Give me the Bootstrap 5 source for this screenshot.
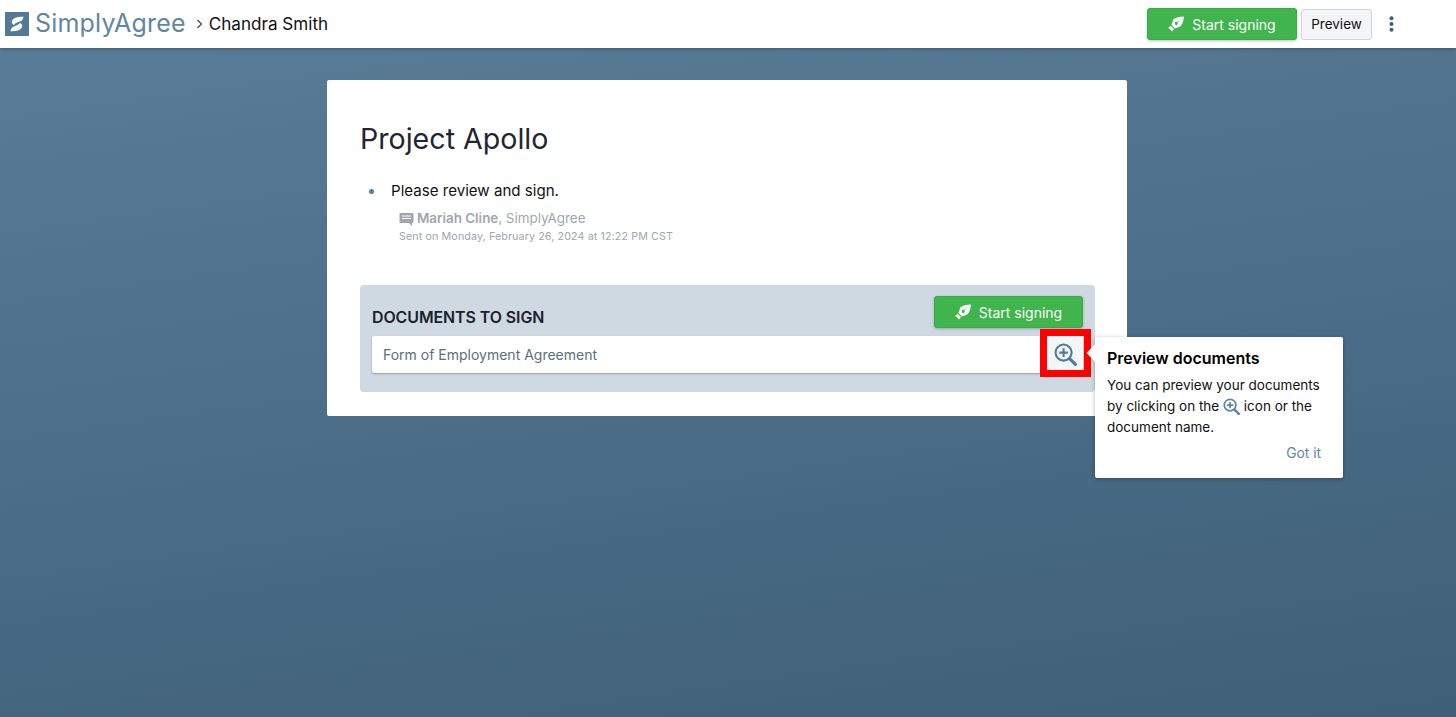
<!DOCTYPE html>
<html lang="en">
<head>
<meta charset="utf-8">
<title>SimplyAgree</title>
<link href="https://cdn.jsdelivr.net/npm/bootstrap@5.3.0/dist/css/bootstrap.min.css" rel="stylesheet">
<style>
html,body{height:100%}
body{font-family:Inter,"Liberation Sans",sans-serif;background:linear-gradient(172deg,#5a7d99 0%,#3f5f78 100%);overflow:hidden;color:#1a202c}
.topbar{height:48px;background:#fff;box-shadow:0 1px 4px rgba(0,0,0,.25);padding:0 46px 0 5px}
.brand-name{font-family:Inter,sans-serif;font-size:25px;font-weight:400;color:#5f87a3;letter-spacing:.2px;margin-left:6px;line-height:1}
.crumb-sep{margin:0 6px 0 10px;display:flex}
.crumb-name{font-size:17.1px;color:#111}
.go-btn{background:#41b54d;border:1px solid #3aa946;color:#fff;font-size:14px;border-radius:3px;box-shadow:0 1px 3px rgba(0,0,0,.25);display:flex;align-items:center;justify-content:center;gap:8px;padding:0}
.go-btn:hover{background:#41b54d;color:#fff}
.go-top{width:150px;height:32px}
.go-doc{width:149px;height:32px}
.prev-btn{width:71px;height:31px;background:#f4f5f7;border:1px solid #cfd4da;border-radius:3px;font-size:13.5px;color:#111;padding:0;margin-left:4px}
.dots{width:38px}
.sheet{width:800px;height:336px;margin:32px 0 0 327px;background:#fff;border-radius:2px;padding:43px 32px 0 33px;position:relative}
.sheet-title{font-size:28.6px;font-weight:400;line-height:32px;margin:0 0 26px;color:#1f2630}
.note{list-style:none;padding:0 0 0 31px;margin:0;position:relative;font-size:15.1px;line-height:20px;color:#111}
.note::before{content:"";position:absolute;left:9px;top:8px;width:5px;height:5px;border-radius:50%;background:#4f83a8}
.note-meta{margin-left:8px;color:#a0a6ae}
.note-by{font-size:13.4px;line-height:17px;margin-top:9px;display:flex;align-items:center;gap:3px}
.note-when{font-size:10.7px;line-height:14px;margin-top:3px;letter-spacing:.12px}
.docs{margin-top:41px;width:735px;height:107px;background:#cfd9e2;border-radius:4px;padding:11px 12px 0}
.docs-title{font-size:15.9px;font-weight:600;color:#1a202c;margin:0;line-height:20px;padding-top:12px;letter-spacing:-.05px}
.doc-row{height:37px;background:#fff;border-radius:2px;box-shadow:0 1px 2px rgba(0,0,0,.3);margin-top:8px;padding-left:11px;font-size:14px;color:#5a7080}
.mag-cell{width:38px;height:37px;background:#f3f6f8;padding-left:2px}
.mark-box{position:absolute;left:713px;top:249px;width:51px;height:48px;border:7px solid #f00}
.tip{position:absolute;left:768px;top:257px;width:248px;height:141px;background:#fff;border-radius:2px;box-shadow:0 1px 4px rgba(0,0,0,.3);padding:11px 12px 0;font-size:13.5px;line-height:21px;color:#111}
.tip::before{content:"";position:absolute;left:-6px;top:10px;width:12px;height:12px;background:#fff;transform:rotate(45deg)}
.tip-title{font-size:16px;font-weight:600;line-height:20px;margin:0 0 7px;color:#000}
.tip-act{font-size:13.8px;color:#5f87a3;text-align:right;margin:5px 10px 0 0}
.tip-line svg{vertical-align:-4px}
</style>
</head>
<body>
<nav class="topbar d-flex align-items-center justify-content-between">
  <div class="d-flex align-items-center">
    <svg width="24" height="24" viewBox="0 0 24 24"><rect width="24" height="24" fill="#527a98"/><path d="M18.500 4.800C13.500 4.600 8.200 5.600 7 9c-.6 1.800.2 3.100 2 3.900 1.500-1.800 4.300-3.100 6.600-3.600 1.700-.9 2.600-2.500 2.900-4.500z" fill="#fff"/><path d="M5.500 19.200C10.500 19.400 15.800 18.400 17 15c.6-1.800-.2-3.100-2-3.900-1.500 1.800-4.300 3.100-6.600 3.600-1.700.9-2.600 2.500-2.900 4.500z" fill="#fff"/></svg>
    <span class="brand-name">SimplyAgree</span>
    <span class="crumb-sep"><svg width="7" height="10" viewBox="0 0 7 10"><path d="M1.500 1l4 4-4 4" fill="none" stroke="#444" stroke-width="1.200"/></svg></span>
    <span class="crumb-name">Chandra Smith</span>
  </div>
  <div class="d-flex align-items-center">
    <button class="btn go-btn go-top"><svg width="16" height="16" viewBox="0 0 16 16"><path d="M15.800.4C12 .4 8 1.200 5.500 3.200L3.400 8.800l3.600 3.600 5.600-2.100C14.700 7.900 15.700 4.200 15.800.4zM8.700 8.900A1.500 1.500 0 1 1 9 6.100l3.500-3.100-3 3.600a1.500 1.500 0 0 1-.8 2.300zM2.700 9.800l3.300 3.300-1.900 2.400L.2 11.700z" fill="#fff" fill-rule="evenodd"/></svg>Start signing</button>
    <button class="btn prev-btn">Preview</button>
    <div class="dots d-flex justify-content-center"><svg width="5" height="16" viewBox="0 0 5 16"><circle cx="2.500" cy="2.200" r="2" fill="#3f5f78"/><circle cx="2.500" cy="8" r="2" fill="#3f5f78"/><circle cx="2.500" cy="13.800" r="2" fill="#3f5f78"/></svg></div>
  </div>
</nav>
<main class="sheet">
  <h1 class="sheet-title">Project Apollo</h1>
  <ul class="note">
    <li>Please review and sign.
      <div class="note-meta">
        <div class="note-by"><svg width="15" height="14" viewBox="0 0 15 14"><path d="M1.500 1h12a1 1 0 0 1 1 1v8a1 1 0 0 1-1 1H13v3l-3-3H1.500a1 1 0 0 1-1-1V2a1 1 0 0 1 1-1zM3 3.500v1h9v-1zM3 6v1h9V6z" fill="#a0a6ae" fill-rule="evenodd"/></svg><span><b class="fw-semibold">Mariah Cline</b>, SimplyAgree</span></div>
        <div class="note-when">Sent on Monday, February 26, 2024 at 12:22 PM CST</div>
      </div>
    </li>
  </ul>
  <section class="docs">
    <div class="d-flex justify-content-between align-items-start">
      <h2 class="docs-title">DOCUMENTS TO SIGN</h2>
      <button class="btn go-btn go-doc"><svg width="16" height="16" viewBox="0 0 16 16"><path d="M15.800.4C12 .4 8 1.200 5.500 3.200L3.400 8.800l3.600 3.600 5.600-2.100C14.700 7.900 15.700 4.200 15.800.4zM8.700 8.900A1.500 1.500 0 1 1 9 6.100l3.500-3.100-3 3.600a1.500 1.500 0 0 1-.8 2.300zM2.700 9.800l3.300 3.300-1.900 2.400L.2 11.700z" fill="#fff" fill-rule="evenodd"/></svg>Start signing</button>
    </div>
    <div class="doc-row d-flex align-items-center justify-content-between">
      <span>Form of Employment Agreement</span>
      <span class="mag-cell d-flex align-items-center justify-content-center"><svg width="23" height="23" viewBox="0 0 24 24"><circle cx="10" cy="10" r="8.400" fill="none" stroke="#527a98" stroke-width="2.200"/><path d="M10 5.500v9M5.500 10h9" stroke="#527a98" stroke-width="2.200"/><path d="M16.300 16.300l6 6" stroke="#527a98" stroke-width="3.200" stroke-linecap="round"/></svg></span>
    </div>
  </section>
  <div class="mark-box"></div>
  <aside class="tip">
    <h3 class="tip-title">Preview documents</h3>
    <div class="tip-line">You can preview your documents</div>
    <div class="tip-line"><span>by clicking on the</span> <svg width="17" height="17" viewBox="0 0 24 24"><circle cx="10" cy="10" r="8.200" fill="none" stroke="#5a87a8" stroke-width="2.400"/><path d="M10 5.500v9M5.500 10h9" stroke="#5a87a8" stroke-width="2.400"/><path d="M16.300 16.300l6 6" stroke="#5a87a8" stroke-width="3.400" stroke-linecap="round"/></svg> <span>icon or the</span></div>
    <div class="tip-line">document name.</div>
    <div class="tip-act">Got it</div>
  </aside>
</main>
<script src="https://cdn.jsdelivr.net/npm/bootstrap@5.3.0/dist/js/bootstrap.bundle.min.js"></script>
</body>
</html>
